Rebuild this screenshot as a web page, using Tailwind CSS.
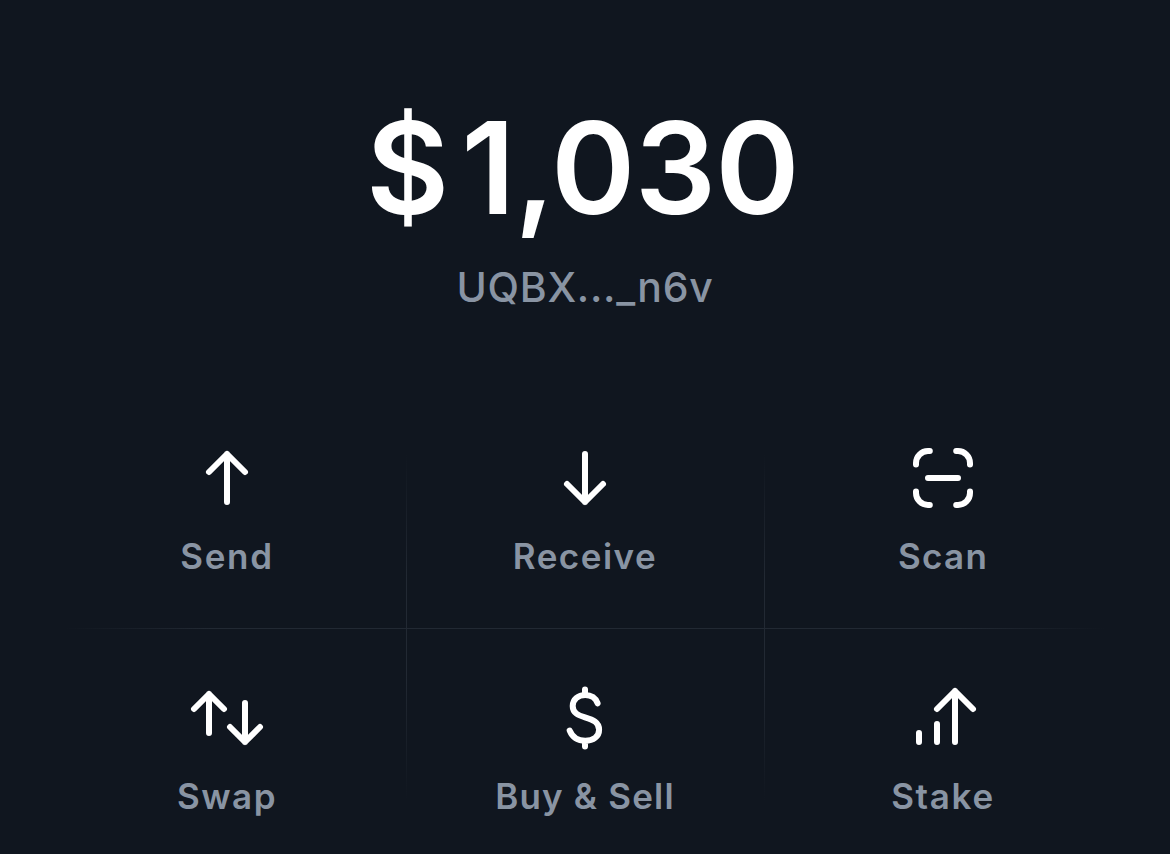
<!DOCTYPE html>
<html lang="en">
<head>
    <meta charset="UTF-8">
    <meta name="viewport" content="width=device-width, initial-scale=1.0">
    <title>Wallet</title>
    <script src="https://cdn.jsdelivr.net/npm/@tailwindcss/browser@4"></script>
</head>
<body class="bg-[#10161f] font-['Inter',sans-serif]">
    <div class="h-[854px] overflow-hidden">
        <!-- Balance -->
        <header class="flex flex-col items-center pt-[88px] h-[388px]">
            <h1 class="flex gap-3 pr-[5px] text-[128px] leading-[160px] font-semibold text-white whitespace-nowrap">
                <span>$</span><span class="tracking-[-0.8px]">1,030</span>
            </h1>
            <p class="mt-[15px] text-[41px] leading-[48px] tracking-[0.7px] font-[450] text-[#8994a3] whitespace-nowrap">UQBX..._n6v</p>
        </header>

        <!-- Actions -->
        <main class="relative grid grid-cols-3 mx-12 text-[35px] leading-[48px] font-semibold text-[#8994a3]">
            <button class="h-[240px] pt-12 flex flex-col items-center">
                <svg class="size-[84px] text-white" viewBox="0 0 28 28" fill="none" stroke="currentColor" stroke-width="2" stroke-linecap="round" stroke-linejoin="round">
                    <path d="M14 22V6M8 12l6-6 6 6"/>
                </svg>
                <span class="mt-3 tracking-[1.7px]">Send</span>
            </button>
            <button class="h-[240px] pt-12 flex flex-col items-center">
                <svg class="size-[84px] text-white" viewBox="0 0 28 28" fill="none" stroke="currentColor" stroke-width="2" stroke-linecap="round" stroke-linejoin="round">
                    <path d="M14 6v16M8 16l6 6 6-6"/>
                </svg>
                <span class="mt-3 tracking-[1.5px]">Receive</span>
            </button>
            <button class="h-[240px] pt-12 flex flex-col items-center">
                <svg class="size-[84px] text-white" viewBox="0 0 28 28" fill="none" stroke="currentColor" stroke-width="2" stroke-linecap="round" stroke-linejoin="round">
                    <path d="M5 9.5V9a4 4 0 0 1 4-4h.6M18.4 5h.6a4 4 0 0 1 4 4v.5M23 18.5v.5a4 4 0 0 1-4 4h-.6M9.6 23H9a4 4 0 0 1-4-4v-.5M9 14h10"/>
                </svg>
                <span class="mt-3 tracking-[1.3px]">Scan</span>
            </button>
            <button class="h-[240px] pt-12 flex flex-col items-center">
                <svg class="size-[84px] text-white" viewBox="0 0 28 28" fill="none" stroke="currentColor" stroke-width="2" stroke-linecap="round" stroke-linejoin="round">
                    <path d="M8 19V6M3 11l5-5 5 5M20 9v13M15 17l5 5 5-5"/>
                </svg>
                <span class="mt-3 tracking-[1.5px]">Swap</span>
            </button>
            <button class="h-[240px] pt-12 flex flex-col items-center">
                <svg class="size-[84px] text-white" viewBox="0 0 28 28" fill="none" stroke="currentColor" stroke-width="2" stroke-linecap="round" stroke-linejoin="round">
                    <path d="M14 4.5v1.8M14 21.7v1.8M18.2 9.1C17.6 7.3 16 6.3 14.1 6.3 11.7 6.3 9.9 7.8 9.9 10c0 2.3 1.8 3.1 4.1 3.8 2.7.8 4.7 1.6 4.7 4.1 0 2.2-1.9 3.7-4.6 3.7-2.4 0-4.3-1.2-5.2-3.4"/>
                </svg>
                <span class="mt-3 tracking-[1.2px]">Buy &amp; Sell</span>
            </button>
            <button class="h-[240px] pt-12 flex flex-col items-center">
                <svg class="size-[84px] text-white" viewBox="0 0 28 28" fill="none" stroke="currentColor" stroke-width="2" stroke-linecap="round" stroke-linejoin="round">
                    <path d="M6 19v3M12 16v6M18 22V5M12 11l6-6 6 6"/>
                </svg>
                <span class="mt-3 tracking-[1.7px]">Stake</span>
            </button>

            <!-- Dividers fade out towards the edges -->
            <div class="absolute inset-x-4 top-[240px] h-px bg-[linear-gradient(to_right,transparent,#222933_14%,#222933_86%,transparent)]"></div>
            <div class="absolute left-[358px] top-[64px] h-[350px] w-px bg-[linear-gradient(to_bottom,transparent,#222933_36%,#222933_64%,transparent)]"></div>
            <div class="absolute left-[716px] top-[64px] h-[350px] w-px bg-[linear-gradient(to_bottom,transparent,#222933_36%,#222933_64%,transparent)]"></div>
        </main>
    </div>
</body>
</html>
